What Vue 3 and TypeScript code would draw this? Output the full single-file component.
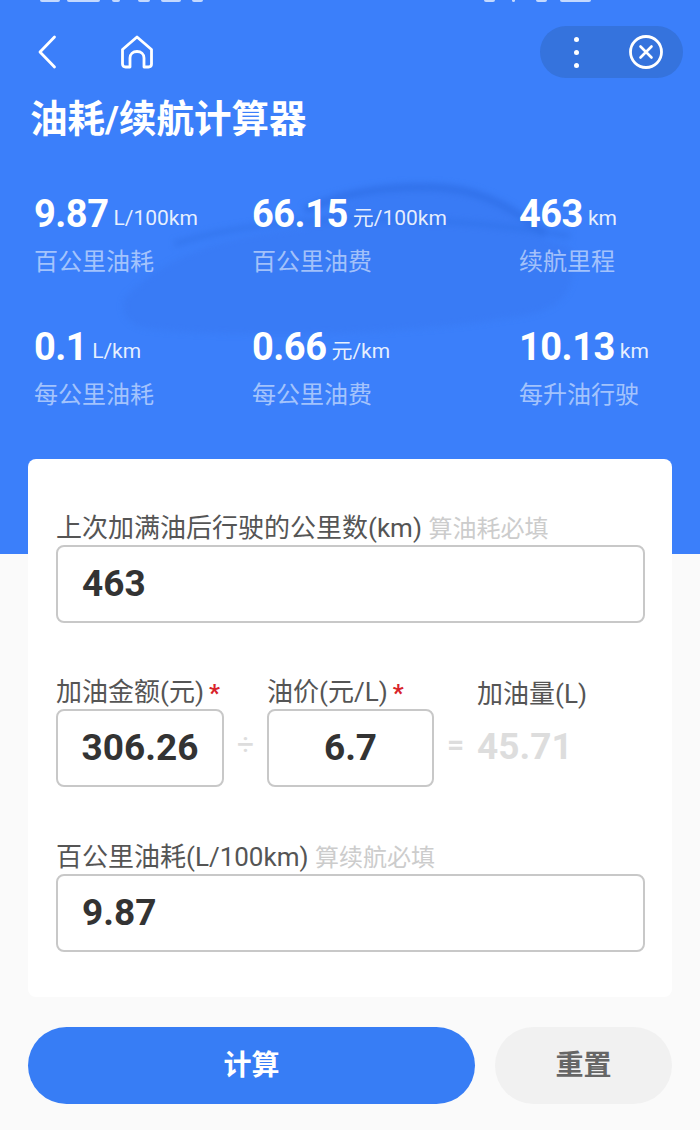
<script setup lang="ts">
import { ref } from 'vue';

interface Stat {
	value: string;
	unit: string;
	label: string;
}

// remains of the status bar, cut off by the top edge
const statusLeft = [
	{ w: 20, gap: 40 },
	{ w: 33, gap: 7 },
	{ w: 8, gap: 12 },
	{ w: 12, gap: 18 },
	{ w: 20, gap: 11 },
	{ w: 11, gap: 11 },
];
const statusRight = [
	{ w: 11, gap: 0 },
	{ w: 3, gap: 17 },
	{ w: 11, gap: 21 },
	{ w: 31, gap: 13 },
];

const stats = ref<Stat[]>([
	{ value: '9.87', unit: 'L/100km', label: '百公里油耗' },
	{ value: '66.15', unit: '元/100km', label: '百公里油费' },
	{ value: '463', unit: 'km', label: '续航里程' },
	{ value: '0.1', unit: 'L/km', label: '每公里油耗' },
	{ value: '0.66', unit: '元/km', label: '每公里油费' },
	{ value: '10.13', unit: 'km', label: '每升油行驶' },
]);

const distance = ref('463');
const amount = ref('306.26');
const price = ref('6.7');
const consumption = ref('9.87');
</script>

<template>
	<div class="page">
		<header class="hero">
			<svg class="car" width="560" height="190" viewBox="0 0 560 190" fill="none">
				<path d="M20 120C70 70 130 58 200 50C240 20 290 8 340 12C385 16 415 40 440 62C460 66 470 72 468 80C470 120 450 135 400 140C300 158 120 160 40 150C22 145 15 135 20 120Z" fill="#3775ee" fill-opacity=".4" />
				<path d="M200 32C240 14 290 6 340 10C385 14 415 36 440 56" stroke="#2f6fe6" stroke-width="7" stroke-opacity=".85" />
				<path d="M70 66C150 40 300 30 465 58" stroke="#2f6fe6" stroke-width="5" stroke-opacity=".6" />
			</svg>

			<div class="status">
				<div class="status-group">
					<i v-for="(b, i) in statusLeft" :key="i" :style="{ width: b.w + 'px', marginLeft: b.gap + 'px' }"></i>
				</div>
				<div class="status-group status-right">
					<i v-for="(b, i) in statusRight" :key="i" :style="{ width: b.w + 'px', marginLeft: b.gap + 'px' }"></i>
				</div>
			</div>

			<nav class="nav">
				<div class="nav-left">
					<svg width="20" height="34" viewBox="0 0 20 34" fill="none">
						<path d="M17.5 2L3 17L17.5 32" stroke="#fff" stroke-width="2.8" stroke-linecap="round" stroke-linejoin="round" />
					</svg>
					<svg width="34" height="34" viewBox="0 0 34 34" fill="none">
						<path d="M2.5 14.5L17 2L31.5 14.5V29C31.5 31 30.4 32 28.5 32H24V23C24 19 21 16.5 17 16.5C13 16.5 10 19 10 23V32H5.5C3.6 32 2.5 31 2.5 29Z" stroke="#fff" stroke-width="2.8" stroke-linejoin="round" />
					</svg>
				</div>
				<div class="capsule">
					<div class="dots"><span></span><span></span><span></span></div>
					<svg width="36" height="36" viewBox="0 0 36 36" fill="none">
						<circle cx="18" cy="18" r="15.5" stroke="#fff" stroke-width="2.8" />
						<path d="M12.5 12.5L23.5 23.5M23.5 12.5L12.5 23.5" stroke="#fff" stroke-width="2.6" stroke-linecap="round" />
					</svg>
				</div>
			</nav>

			<h1 class="title">油耗/续航计算器</h1>

			<section class="stats">
				<div v-for="s in stats" :key="s.label" class="stat">
					<div class="stat-line">
						<span class="stat-value">{{ s.value }}</span>
						<span class="stat-unit">{{ s.unit }}</span>
					</div>
					<div class="stat-label">{{ s.label }}</div>
				</div>
			</section>
		</header>

		<main class="main">
			<form class="card" @submit.prevent>
				<div class="field">
					<div class="label">上次加满油后行驶的公里数(km) <span class="hint">算油耗必填</span></div>
					<div class="input">{{ distance }}</div>
				</div>

				<div class="calc">
					<div class="calc-col">
						<div class="label">加油金额(元)<em>*</em></div>
						<div class="input input-center">{{ amount }}</div>
					</div>
					<span class="op">÷</span>
					<div class="calc-col">
						<div class="label">油价(元/L)<em>*</em></div>
						<div class="input input-center">{{ price }}</div>
					</div>
					<span class="op op-eq">=</span>
					<div class="calc-col calc-result">
						<div class="label">加油量(L)</div>
						<div class="result">45.71</div>
					</div>
				</div>

				<div class="field">
					<div class="label">百公里油耗(L/100km) <span class="hint">算续航必填</span></div>
					<div class="input">{{ consumption }}</div>
				</div>
			</form>

			<div class="actions">
				<button class="btn btn-primary" type="button">计算</button>
				<button class="btn btn-reset" type="button">重置</button>
			</div>
		</main>
	</div>
</template>

<style scoped>
.page {
	width: 700px;
	height: 1130px;
	overflow: hidden;
	background: #fafafa;
	font-family: Roboto, "Noto Sans CJK SC", sans-serif;
}

.hero {
	position: relative;
	height: 554px;
	background: #3b7ffa;
	color: #fff;
	overflow: hidden;
}

.car {
	position: absolute;
	left: 105px;
	top: 178px;
	filter: blur(3px);
}

.status {
	position: relative;
	display: flex;
	justify-content: space-between;
	height: 3px;
	padding-right: 109px;
}

.status-group {
	display: flex;
}

.status-group i {
	display: block;
	height: 2px;
	background: rgba(255, 255, 255, 0.7);
	border-radius: 0 0 2px 2px;
}

.nav {
	position: relative;
	display: flex;
	justify-content: space-between;
	align-items: center;
	height: 52px;
	margin-top: 23px;
	padding: 0 17px 0 37px;
}

.nav-left {
	display: flex;
	align-items: center;
	gap: 63px;
}

.capsule {
	display: flex;
	align-items: center;
	justify-content: space-between;
	box-sizing: border-box;
	width: 143px;
	height: 52px;
	padding: 0 19px 0 34px;
	border-radius: 26px;
	background: #3573dd;
}

.dots {
	display: flex;
	flex-direction: column;
	gap: 8px;
}

.dots span {
	width: 5px;
	height: 5px;
	border-radius: 50%;
	background: #fff;
}

.title {
	position: relative;
	margin: 16px 0 0 30px;
	font-size: 37.5px;
	line-height: 50px;
	font-weight: 700;
	white-space: nowrap;
}

.stats {
	position: relative;
	display: grid;
	grid-template-columns: 218px 267px 1fr;
	row-gap: 45px;
	margin: 48px 0 0 34px;
}

.stat-line {
	display: flex;
	align-items: baseline;
	gap: 5px;
	height: 44px;
	line-height: 44px;
}

.stat-value {
	font-size: 38px;
	font-weight: 700;
	letter-spacing: -0.5px;
}

.stat-unit {
	font-size: 21px;
	color: rgba(255, 255, 255, 0.88);
	transform: translateY(-2px);
}

.stat-label {
	margin-top: 8px;
	font-size: 24px;
	line-height: 36px;
	color: rgba(255, 255, 255, 0.55);
}

.main {
	position: relative;
	margin-top: -95px;
	padding: 0 28px;
}

.card {
	box-sizing: border-box;
	height: 538px;
	padding: 52px 28px 0;
	border-radius: 8px;
	background: #fff;
}

.label {
	height: 34px;
	font-size: 26px;
	line-height: 34px;
	color: #555;
	white-space: nowrap;
}

.label em {
	margin-left: 5px;
	font-style: normal;
	font-weight: 700;
	font-size: 24px;
	color: #d8232a;
}

.hint {
	font-size: 24px;
	color: #ccc;
}

.input {
	box-sizing: border-box;
	height: 78px;
	width: 589px;
	padding-left: 24px;
	border: 2px solid #c8c8c8;
	border-radius: 8px;
	font-size: 37px;
	font-weight: 700;
	line-height: 74px;
	color: #333;
}

.input-center {
	width: auto;
	padding: 0;
	text-align: center;
}

.calc {
	display: grid;
	grid-template-columns: 168px 43px 167px 43px 1fr;
	margin: 52px 0 53px;
}

.calc-col {
	min-width: 0;
}

.calc-result .label {
	margin-top: 2px;
	margin-bottom: -2px;
}

.op {
	align-self: end;
	height: 78px;
	font-size: 30px;
	line-height: 72px;
	text-align: center;
	color: #ddd;
}

.op-eq {
	font-size: 30px;
	font-weight: 700;
}

.result {
	font-size: 37px;
	font-weight: 700;
	line-height: 76px;
	color: #ddd;
}

.actions {
	display: flex;
	gap: 20px;
	margin-top: 30px;
}

.btn {
	height: 77px;
	padding: 0 0 5px;
	border: 0;
	border-radius: 39px;
	font-family: inherit;
	font-size: 28px;
	font-weight: 700;
}

.btn-primary {
	width: 447px;
	background: #377df5;
	color: #fff;
}

.btn-reset {
	width: 177px;
	background: #f1f1f1;
	color: #666;
}
</style>

<style>
body {
	background: #fafafa;
}
</style>
